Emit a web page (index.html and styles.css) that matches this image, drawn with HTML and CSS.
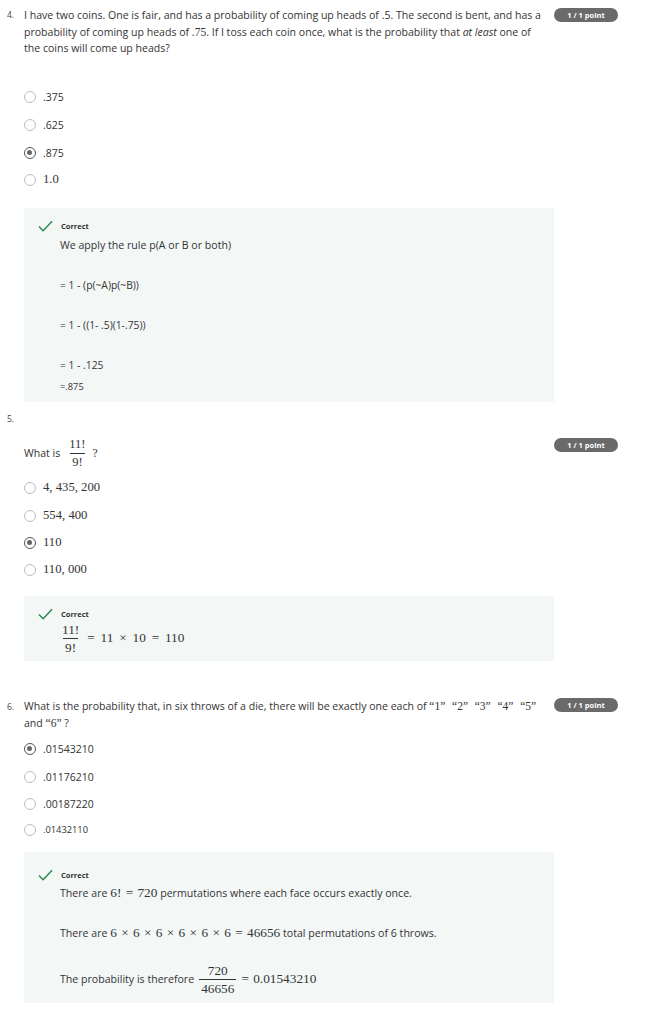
FILE: index.html
```html
<!DOCTYPE html>
<html>
<head>
<meta charset="utf-8">
<link rel="stylesheet" href="styles.css">
</head>
<body>
<div class="page">

  <section class="q q4">
    <div class="qhead">
      <div class="qnum">4.</div>
      <div class="qtext">I have two coins. One is fair, and has a probability of coming up heads of .5. The second is bent, and has a probability of coming up heads of <span class="m">.75</span>. If I toss each coin once, what is the probability that <em>at least</em> one of the coins will come up heads?</div>
      <div class="badge">1 / 1 point</div>
    </div>
    <ul class="opts">
      <li><span class="radio"></span><span>.375</span></li>
      <li><span class="radio"></span><span>.625</span></li>
      <li><span class="radio on"></span><span>.875</span></li>
      <li class="short"><span class="radio"></span><span class="m om">1.0</span></li>
    </ul>
    <div class="fb fb4">
      <div class="fbhead"><svg class="check" viewBox="0 0 16 12" width="15" height="12"><path d="M1 6.5 L5.5 11 L15 1" fill="none" stroke="#2a8a4e" stroke-width="1.6"/></svg><span class="ok">Correct</span></div>
      <div class="fbbody">
        <p class="l1">We apply the rule p(A or B or both)</p>
        <p class="sm gap">= 1 - (p(~A)p(~B))</p>
        <p class="sm gap">= 1 - ((1- .5)(1-.75))</p>
        <p class="sm gap">= 1 - .125</p>
        <p class="xs">=.875</p>
      </div>
    </div>
  </section>

  <section class="q q5">
    <div class="qhead">
      <div class="qnum n5">5.</div>
      <div class="qtext q5text">What is <span class="frac m"><span class="num">11!</span><span class="den">9!</span></span> <span class="m">?</span></div>
      <div class="badge b5">1 / 1 point</div>
    </div>
    <ul class="opts m5">
      <li><span class="radio"></span><span class="m om">4, 435, 200</span></li>
      <li><span class="radio"></span><span class="m om">554, 400</span></li>
      <li class="short"><span class="radio on"></span><span class="m om">110</span></li>
      <li><span class="radio"></span><span class="m om">110, 000</span></li>
    </ul>
    <div class="fb fb5">
      <div class="fbhead"><svg class="check" viewBox="0 0 16 12" width="15" height="12"><path d="M1 6.5 L5.5 11 L15 1" fill="none" stroke="#2a8a4e" stroke-width="1.6"/></svg><span class="ok">Correct</span></div>
      <div class="fbbody eq">
        <span class="frac m"><span class="num">11!</span><span class="den">9!</span></span><span class="m big wide">= 11 × 10 = 110</span>
      </div>
    </div>
  </section>

  <section class="q q6">
    <div class="qhead">
      <div class="qnum">6.</div>
      <div class="qtext">What is the probability that, in six throws of a die, there will be exactly one each of <span class="m qt">“1”</span> <span class="m qt">“2”</span> <span class="m qt">“3”</span> <span class="m qt">“4”</span> <span class="m qt">“5”</span> and <span class="m">“6”</span> ?</div>
      <div class="badge">1 / 1 point</div>
    </div>
    <ul class="opts">
      <li><span class="radio on"></span><span>.01543210</span></li>
      <li><span class="radio"></span><span>.01176210</span></li>
      <li class="short"><span class="radio"></span><span>.00187220</span></li>
      <li class="short"><span class="radio"></span><span class="sm9">.01432110</span></li>
    </ul>
    <div class="fb fb6">
      <div class="fbhead"><svg class="check" viewBox="0 0 16 12" width="15" height="12"><path d="M1 6.5 L5.5 11 L15 1" fill="none" stroke="#2a8a4e" stroke-width="1.6"/></svg><span class="ok">Correct</span></div>
      <div class="fbbody">
        <p class="l1">There are <span class="m big">6! = 720</span> permutations where each face occurs exactly once.</p>
        <p class="gap2">There are <span class="m big">6 × 6 × 6 × 6 × 6 × 6 = 46656</span> total permutations of 6 throws.</p>
        <p class="gap3 eq">The probability is therefore <span class="frac m"><span class="num">720</span><span class="den">46656</span></span><span class="m big">= 0.01543210</span></p>
      </div>
    </div>
  </section>

</div>
</body>
</html>
```

FILE: styles.css
```css
* { box-sizing: border-box; }
html, body { margin: 0; padding: 0; background: #fff; }
body {
  font-family: "Open Sans", "Noto Sans", sans-serif;
  color: #333;
  font-size: 10px;
}
.page { padding: 0 0 0 7px; width: 646px; }
p { margin: 0; }
.m { font-family: "Liberation Serif", "DejaVu Serif", serif; font-size: 11.5px; }
.big { font-size: 13.3px; word-spacing: 1px; }
.wide { word-spacing: 2.5px; }
em { font-style: italic; }

.qhead {
  display: grid;
  grid-template-columns: 10px 523px 64px;
  column-gap: 7px;
  align-items: start;
}
.qnum { font-size: 8.5px; line-height: 16px; color: #444; }
.qtext { font-size: 10.55px; line-height: 16.5px; color: #333; }
.qt { margin-right: 4px; }
.badge {
  background: #6a6a6a;
  color: #fff;
  font-weight: 700;
  font-size: 7.5px;
  height: 14px;
  line-height: 14px;
  border-radius: 7px;
  text-align: center;
}

.q4 { padding-top: 7px; }
.q4 .badge { margin-top: 1px; }

.opts { list-style: none; margin: 0; padding: 0 0 0 17px; }
.opts li {
  display: flex;
  align-items: center;
  height: 28px;
  gap: 7px;
  font-size: 10.5px;
}
.opts li.short { height: 26px; }
.opts .om { font-size: 12.7px; }
.q4 .opts { margin-top: 26px; }
.radio {
  width: 12px;
  height: 12px;
  border: 1px solid #bdbdbd;
  border-radius: 50%;
  flex: none;
  position: relative;
}
.radio.on { border: 1.5px solid #555; }
.radio.on::after {
  content: "";
  position: absolute;
  left: 2px; top: 2px;
  width: 5px; height: 5px;
  border-radius: 50%;
  background: #666;
}
.opts .sm9 { font-size: 9.3px; }

.fb {
  margin-left: 17px;
  width: 530px;
  background: #f3f8f7;
  padding: 12px 0 0 14px;
}
.fbhead { display: flex; align-items: center; height: 12px; }
.check { margin-right: 8px; }
.ok { font-size: 7.5px; font-weight: 700; color: #333; }
.fbbody { padding-left: 22px; font-size: 10.6px; }
.fbbody .l1 { margin-top: 6px; font-size: 10.6px; line-height: 14px; }
.fbbody .sm { font-size: 10.3px; line-height: 14px; }
.fbbody .gap { margin-top: 26px; }
.fbbody .xs { font-size: 9.3px; line-height: 14px; margin-top: 8px; }
.fb4 { margin-top: 15px; height: 194px; }

.frac {
  display: inline-flex;
  flex-direction: column;
  align-items: center;
  vertical-align: middle;
  margin: 0 4px;
}
.frac .num { padding: 0 2px; font-size: 13.3px; line-height: 17px; }
.frac .den { border-top: 1.4px solid #333; padding: 0 2px; font-size: 13.3px; line-height: 17px; }

.q5 { margin-top: 12px; }
.q5 .qnum { line-height: 10px; }
.q5text { display: flex; align-items: center; padding-top: 22px; line-height: 16px; }
.q5text .frac { margin: 0 5px 0 7px; }
.q5text .frac .num, .q5text .frac .den { font-size: 12.5px; line-height: 17px; }
.q5 .badge { margin-top: 24px; }
.m5 { margin-top: 3px; }
.fb5 { margin-top: 12px; height: 65px; padding-top: 12px; }
.fb5 .fbbody { display: flex; align-items: center; margin-top: 1px; }
.fb5 .frac { margin: 0 6px 0 0; }

.q6 { margin-top: 37px; }
.q6 .qtext { line-height: 17px; }
.q6 .qnum { line-height: 17px; }
.q6 .opts { margin-top: 3px; }
.fb6 { margin-top: 9px; height: 151px; padding-top: 17px; }
.fbbody .gap2 { margin-top: 24px; font-size: 10.6px; line-height: 16px; }
.fb6 .l1 { line-height: 16px; margin-top: 4px; }
.gap3 { margin-top: 21px; font-size: 10.6px; display: flex; align-items: center; }
.gap3 .frac { margin: 0 5px 0 5px; }
```
